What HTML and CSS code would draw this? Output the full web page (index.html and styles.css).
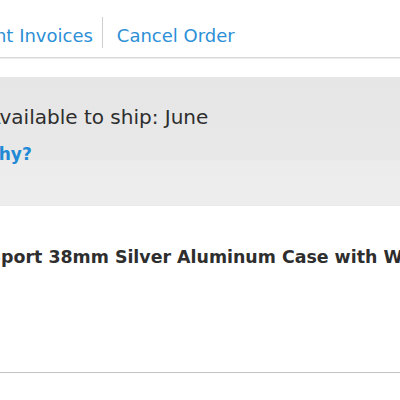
FILE: index.html
```html
<!DOCTYPE html>
<html lang="en">
<head>
<meta charset="utf-8">
<title>Order</title>
<link rel="stylesheet" href="styles.css">
</head>
<body>
<div class="page">
  <nav class="actions">
    <a class="act act-print" href="#">Print Invoices</a>
    <span class="sep"></span>
    <a class="act act-cancel" href="#">Cancel Order</a>
  </nav>
  <section class="notice">
    <p class="ship">Available to ship: June</p>
    <a class="why" href="#">Why?</a>
  </section>
  <section class="item">
    <h2 class="name">Apple Watch Sport 38mm Silver Aluminum Case with White Sport Band</h2>
  </section>
</div>
</body>
</html>
```
FILE: styles.css
```css
html, body {
  margin: 0;
  padding: 0;
  background: #fff;
}
body {
  overflow: hidden;
  font-family: "DejaVu Sans", "Liberation Sans", sans-serif;
  color: #333;
}
.page {
  width: 400px;
}
.actions {
  display: flex;
  align-items: flex-start;
  padding: 17px 0 9px;
  border-bottom: 1px solid #d9d9d9;
  box-shadow: 0 1px 0 #ededed;
}
.act {
  display: block;
  margin-top: 8px;
  font-size: 18px;
  line-height: 21px;
  color: #2d8fd6;
  text-decoration: none;
  white-space: nowrap;
}
.act-print {
  margin-left: -28px;
  margin-right: 9px;
}
.sep {
  width: 1px;
  height: 31px;
  background: #cfcfcf;
}
.act-cancel {
  margin-left: 14px;
}
.notice {
  margin-top: 19px;
  height: 129px;
  box-sizing: border-box;
  padding-top: 28px;
  background: linear-gradient(#e6e6e6, #e8e8e8 64%, #ececec 65%, #ededed);
}
.ship {
  margin: 0 0 0 -13px;
  font-size: 20px;
  line-height: 24px;
  color: #2e2e2e;
  white-space: nowrap;
}
.why {
  display: block;
  margin: 15px 0 0 -20px;
  font-size: 17px;
  line-height: 21px;
  font-weight: bold;
  color: #2189d5;
  text-decoration: none;
}
.item {
  height: 167px;
  box-sizing: border-box;
  padding-top: 40px;
  overflow: hidden;
  background: #fff;
  border-bottom: 1px solid #c2c2c2;
  box-shadow: 0 1px 2px rgba(0, 0, 0, 0.18);
}
.name {
  margin: 0 0 0 -141px;
  font-size: 17.4px;
  line-height: 22px;
  font-weight: bold;
  color: #2e2e2e;
  white-space: nowrap;
}
```
